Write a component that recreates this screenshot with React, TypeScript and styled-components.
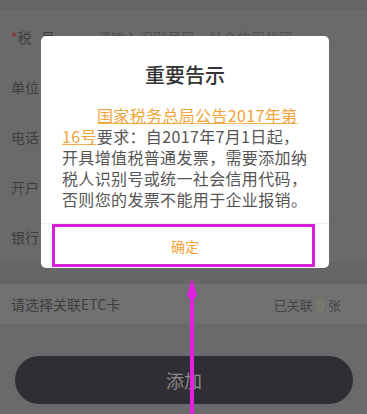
import styled, { createGlobalStyle } from "styled-components";

const GlobalStyle = createGlobalStyle`
  html, body {
    margin: 0;
    padding: 0;
    background: #6a6a6a;
  }
  body {
    font-family: "Noto Sans CJK SC", "Noto Sans", sans-serif;
  }
`;

const Page = styled.div`
  position: relative;
  width: 367px;
  height: 414px;
  overflow: hidden;
  background: #6a6a6a;
  display: flex;
  flex-direction: column;
`;

const TopBar = styled.div`
  height: 11px;
  background: #666;
  border-bottom: 1px solid #707070;
  flex-shrink: 0;
`;

const Row = styled.div`
  height: 50px;
  display: flex;
  align-items: center;
  padding: 0 11px;
  gap: 30px;
  font-size: 14px;
  color: #3e3e3e;
  flex-shrink: 0;
  &:first-of-type {
    height: 56px;
    align-items: flex-start;
    padding-top: 20px;
    box-sizing: border-box;
  }
`;

const Star = styled.span`
  color: #8c2f2f;
`;

const Label = styled.span`
  width: 56px;
`;

const Placeholder = styled.span`
  color: #505050;
`;

const Spacer = styled.div`
  height: 22px;
  background: #666;
  flex-shrink: 0;
`;

const EtcRow = styled.div`
  height: 40px;
  background: #717171;
  display: flex;
  align-items: center;
  justify-content: space-between;
  padding: 0 12px 0 11px;
  font-size: 14px;
  color: #3e3e3e;
  flex-shrink: 0;
`;

const EtcCount = styled.span`
  display: flex;
  align-items: center;
  gap: 4px;
  font-size: 13px;
  color: #444;
  b {
    font-weight: 400;
    color: #8a8262;
  }
`;

const Chevron = styled.span`
  color: #7a7a7a;
  font-size: 13px;
  margin-left: 6px;
`;

const AddButton = styled.button`
  margin: 32px 14px 0 15px;
  height: 48px;
  border: none;
  border-radius: 24px;
  background: #2f2e34;
  color: #8a8a8a;
  font-family: inherit;
  font-size: 18px;
  flex-shrink: 0;
`;

const Dialog = styled.div`
  position: absolute;
  left: 41px;
  top: 36px;
  width: 288px;
  height: 232px;
  background: #fff;
  border-radius: 5px;
  display: flex;
  flex-direction: column;
  box-sizing: border-box;
`;

const Title = styled.div`
  margin-top: 25px;
  font-size: 20px;
  line-height: 28px;
  font-weight: 500;
  color: #333;
  text-align: center;
`;

const Body = styled.p`
  margin: 16px 0 0 21px;
  width: 250px;
  font-size: 16px;
  line-height: 21px;
  letter-spacing: 0.35px;
  color: #555;
  flex: 1;
`;

const Line = styled.span<{ indent?: boolean }>`
  display: block;
  padding-left: ${(props) => (props.indent ? "35px" : "0")};
  white-space: nowrap;
`;

const Link = styled.span`
  color: #f3a43b;
  text-decoration: underline;
  text-decoration-color: #f0b050;
`;

const Footer = styled.div`
  height: 44px;
  border-top: 1px solid #eee;
  display: flex;
  align-items: center;
  justify-content: center;
  color: #f5a33a;
  font-size: 14px;
  flex-shrink: 0;
`;

const Highlight = styled.div`
  position: absolute;
  left: 52px;
  top: 224px;
  width: 263px;
  height: 43px;
  border: 3px solid #d61fd6;
  box-sizing: border-box;
  pointer-events: none;
`;

const Arrow = styled.svg`
  position: absolute;
  left: 182px;
  top: 276px;
  pointer-events: none;
`;

export default function App() {
  return (
    <>
      <GlobalStyle />
      <Page>
        <TopBar />
        <Row>
          <Label>
            <Star>*</Star>税&nbsp;&nbsp;&nbsp;号
          </Label>
          <Placeholder>请输入识别号码，社会信用代码</Placeholder>
        </Row>
        <Row>
          <Label>单位</Label>
        </Row>
        <Row>
          <Label>电话</Label>
        </Row>
        <Row>
          <Label>开户</Label>
        </Row>
        <Row>
          <Label>银行</Label>
        </Row>
        <Spacer />
        <EtcRow>
          <span>请选择关联ETC卡</span>
          <EtcCount>
            已关联 <b>0</b> 张<Chevron>›</Chevron>
          </EtcCount>
        </EtcRow>
        <AddButton>添加</AddButton>

        <Dialog>
          <Title>重要告示</Title>
          <Body>
            <Line indent>
              <Link>国家税务总局公告2017年第</Link>
            </Line>
            <Line>
              <Link>16号</Link>要求：自2017年7月1日起，
            </Line>
            <Line>开具增值税普通发票，需要添加纳</Line>
            <Line>税人识别号或统一社会信用代码，</Line>
            <Line>否则您的发票不能用于企业报销。</Line>
          </Body>
          <Footer>确定</Footer>
        </Dialog>
        <Highlight />
        <Arrow width="20" height="140" viewBox="0 0 20 140">
          <rect x="8" y="14" width="4" height="126" fill="#e21fe2" />
          <path d="M10 2 L15 20 L10 24 L5 20 Z" fill="#e21fe2" />
        </Arrow>
      </Page>
    </>
  );
}
